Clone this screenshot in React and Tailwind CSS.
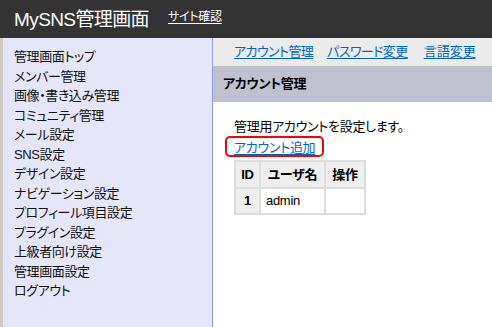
import React from "react";

const menu = [
  "管理画面トップ",
  "メンバー管理",
  "画像・書き込み管理",
  "コミュニティ管理",
  "メール設定",
  "SNS設定",
  "デザイン設定",
  "ナビゲーション設定",
  "プロフィール項目設定",
  "プラグイン設定",
  "上級者向け設定",
  "管理画面設定",
  "ログアウト",
];

export default function App() {
  return (
    <div
      className="w-[492px] h-[327px] overflow-hidden bg-white text-black [font-feature-settings:'palt']"
      style={{ fontFamily: '"Liberation Sans", "Noto Sans CJK JP", sans-serif' }}
    >
      <header className="h-[38px] bg-[#333333] flex items-center pl-[14px] gap-[19px]">
        <span className="text-white text-[19px] leading-none tracking-[-0.6px]">MySNS管理画面</span>
        <a className="text-white text-[12px] underline underline-offset-2 leading-none mt-[-4px] tracking-[-0.3px]">サイト確認</a>
      </header>
      <div className="flex h-[289px]">
        <nav className="w-[213px] shrink-0 bg-[#e6e6fa] border-l-[3px] border-l-[#cfcbc3] border-r border-r-[#8c9cf0] pt-[9px] pl-[11px]">
          <ul className="flex flex-col">
            {menu.map((m) => (
              <li key={m} className="text-[13px] leading-[19.5px] h-[19.5px] text-[#111] tracking-[-0.4px]">
                {m}
              </li>
            ))}
          </ul>
        </nav>
        <main className="flex-1 flex flex-col">
          <div className="h-[28px] bg-[#ebebeb] flex items-center pl-[21px] gap-[14px] text-[13px] tracking-[-0.6px]">
            <a className="text-[#0066cc] underline underline-offset-2">アカウント管理</a>
            <a className="text-[#0066cc] underline underline-offset-2">パスワード変更</a>
            <a className="text-[#0066cc] underline underline-offset-2 ml-[2px] tracking-[0px]">言語変更</a>
          </div>
          <div className="h-[36px] bg-[#bfc1cf] flex items-center pl-[10px] text-[13px] font-bold tracking-[-0.3px]">
            アカウント管理
          </div>
          <div className="pl-[21px] pt-[16px] text-[13px] tracking-[-0.3px]">
            <p className="leading-[18px]">管理用アカウントを設定します。</p>
            <div className="relative h-[24px] flex items-center">
              <a className="text-[#0066cc] underline underline-offset-2 leading-[18px]">アカウント追加</a>
              <span className="absolute left-[-9px] top-[-0.5px] w-[99px] h-[21px] border-2 border-[#ff0000] rounded-[5px]" />
            </div>
            <table className="border-collapse border-2 border-[#dddddd] text-[13px]">
              <thead>
                <tr className="bg-[#eeeeee] h-[27px]">
                  <th className="border-2 border-[#dddddd] w-[25px] font-bold text-center">ID</th>
                  <th className="border-2 border-[#dddddd] w-[65px] font-bold text-center">ユーザ名</th>
                  <th className="border-2 border-[#dddddd] w-[40px] font-bold text-center">操作</th>
                </tr>
              </thead>
              <tbody>
                <tr className="h-[26px]">
                  <td className="border-2 border-[#dddddd] bg-[#eeeeee] font-bold text-center">1</td>
                  <td className="border-2 border-[#dddddd] px-[5px]">admin</td>
                  <td className="border-2 border-[#dddddd]"></td>
                </tr>
              </tbody>
            </table>
          </div>
        </main>
      </div>
    </div>
  );
}
